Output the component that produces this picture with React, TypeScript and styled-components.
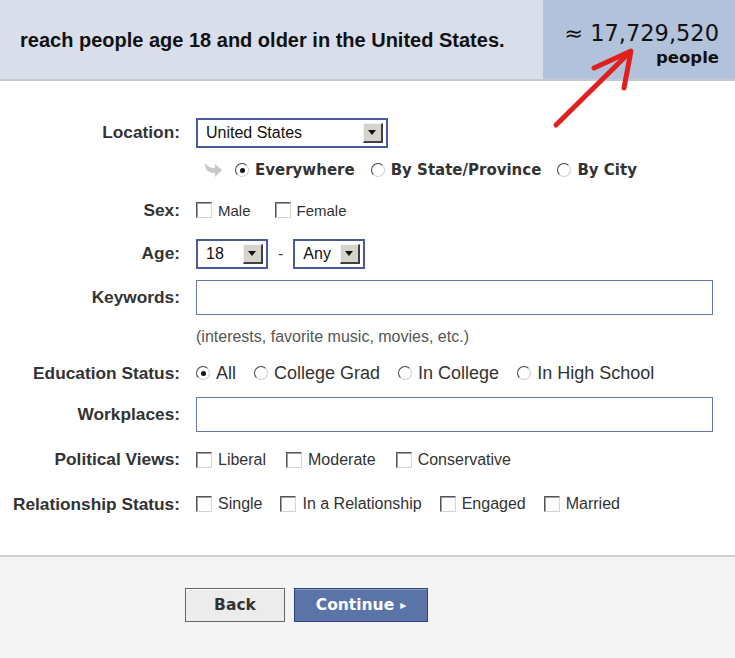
import styled, { createGlobalStyle } from 'styled-components';

const GlobalStyle = createGlobalStyle`
  html, body {
    margin: 0;
    padding: 0;
    background: #ffffff;
  }
  body {
    font-family: "Liberation Sans", Arial, sans-serif;
    color: #222;
  }
`;

export default function App() {
  return (
    <Page>
      <GlobalStyle />
      <Header>
        <HeaderText>reach people age 18 and older in the United States.</HeaderText>
        <Estimate>
          <EstimateNumber>≈ 17,729,520</EstimateNumber>
          <EstimateUnit>people</EstimateUnit>
        </Estimate>
      </Header>

      <Form>
        <Row $h={37}>
          <Label>Location:</Label>
          <Select $w={192}>United States<SelectButton /></Select>
        </Row>
        <Row $h={38}>
          <span />
          <Options $gap={16}>
            <SubArrow viewBox="0 0 20 18">
              <path d="M2 2 C2 10 6 12 12 12 L12 16 L19 9 L12 3 L12 7 C8 7 5 6 2 2 Z" fill="#c9c9c9" />
            </SubArrow>
            <Option $bold $size={15}><Radio $checked />Everywhere</Option>
            <Option $bold $size={15}><Radio />By State/Province</Option>
            <Option $bold $size={15}><Radio />By City</Option>
          </Options>
        </Row>
        <Row $h={42}>
          <Label>Sex:</Label>
          <Options $gap={24}>
            <Option $size={15}><Check />Male</Option>
            <Option $size={15}><Check />Female</Option>
          </Options>
        </Row>
        <Row $h={45}>
          <Label>Age:</Label>
          <Options $gap={10}>
            <Select $w={72}>18<SelectButton /></Select>
            <Dash>-</Dash>
            <Select $w={72}>Any<SelectButton /></Select>
          </Options>
        </Row>
        <Row $h={43}>
          <Label>Keywords:</Label>
          <TextInput />
        </Row>
        <Row $h={35}>
          <span />
          <Hint>(interests, favorite music, movies, etc.)</Hint>
        </Row>
        <Row $h={38}>
          <Label>Education Status:</Label>
          <Options $gap={18}>
            <Option $size={18}><Radio $checked />All</Option>
            <Option $size={18}><Radio />College Grad</Option>
            <Option $size={18}><Radio />In College</Option>
            <Option $size={18}><Radio />In High School</Option>
          </Options>
        </Row>
        <Row $h={45}>
          <Label>Workplaces:</Label>
          <TextInput />
        </Row>
        <Row $h={45}>
          <Label>Political Views:</Label>
          <Options $gap={20}>
            <Option $size={16}><Check />Liberal</Option>
            <Option $size={16}><Check />Moderate</Option>
            <Option $size={16}><Check />Conservative</Option>
          </Options>
        </Row>
        <Row $h={44}>
          <Label>Relationship Status:</Label>
          <Options $gap={18}>
            <Option $size={16}><Check />Single</Option>
            <Option $size={16}><Check />In a Relationship</Option>
            <Option $size={16}><Check />Engaged</Option>
            <Option $size={16}><Check />Married</Option>
          </Options>
        </Row>
      </Form>

      <Footer>
        <Button>Back</Button>
        <Button $primary>Continue <Caret>▸</Caret></Button>
      </Footer>

      <RedArrow viewBox="0 0 120 110">
        <path d="M8 99 L81 27" stroke="#e0201e" strokeWidth="5" strokeLinecap="round" fill="none" />
        <path d="M46 42 L83 25 L76 62" stroke="#e0201e" strokeWidth="5" strokeLinecap="round" strokeLinejoin="round" fill="none" />
      </RedArrow>
    </Page>
  );
}

const Page = styled.div`
  position: relative;
  width: 735px;
  height: 658px;
  overflow: hidden;
  background: #fff;
`;

const Header = styled.div`
  display: grid;
  grid-template-columns: 543px 1fr;
  height: 79px;
  border-bottom: 2px solid #c4c8cf;
`;

const HeaderText = styled.div`
  background: #d9dfea;
  display: flex;
  align-items: center;
  padding-left: 20px;
  padding-top: 2px;
  font-size: 20px;
  font-weight: bold;
  color: #111;
`;

const Estimate = styled.div`
  background: #b2c2db;
  display: flex;
  flex-direction: column;
  align-items: flex-end;
  justify-content: center;
  padding-right: 16px;
  padding-top: 10px;
  font-family: "DejaVu Sans", Verdana, sans-serif;
  color: #111;
`;

const EstimateNumber = styled.div`
  font-size: 22.5px;
  line-height: 26px;
`;

const EstimateUnit = styled.div`
  font-size: 16.5px;
  font-weight: bold;
  line-height: 24px;
`;

const Form = styled.div`
  padding: 33px 0 29px;
  border-bottom: 2px solid #d0d0d0;
`;

const Row = styled.div<{ $h: number }>`
  display: grid;
  grid-template-columns: 180px 1fr;
  column-gap: 16px;
  align-items: center;
  height: ${(p) => p.$h}px;
`;

const Label = styled.div`
  text-align: right;
  font-size: 17.3px;
  font-weight: bold;
  color: #333;
  white-space: nowrap;
`;

const Options = styled.div<{ $gap: number }>`
  display: flex;
  align-items: center;
  gap: ${(p) => p.$gap}px;
`;

const Option = styled.label<{ $bold?: boolean; $size: number }>`
  display: flex;
  align-items: center;
  gap: 6px;
  font-size: ${(p) => p.$size}px;
  font-weight: ${(p) => (p.$bold ? 'bold' : 'normal')};
  font-family: ${(p) => (p.$bold ? '"DejaVu Sans", Verdana, sans-serif' : '"Liberation Sans", Arial, sans-serif')};
  color: #333;
  white-space: nowrap;
`;

const Check = styled.span`
  display: inline-block;
  width: 16px;
  height: 16px;
  box-sizing: border-box;
  background: #fff;
  border-style: solid;
  border-width: 1px;
  border-color: #555 #d4d4d4 #d4d4d4 #555;
  box-shadow: inset 1px 1px 0 #a0a0a0;
`;

const Radio = styled.span<{ $checked?: boolean }>`
  position: relative;
  display: inline-block;
  width: 14px;
  height: 14px;
  box-sizing: border-box;
  border-radius: 50%;
  background: #fff;
  border-style: solid;
  border-width: 1.5px;
  border-color: #444 #d0d0d0 #d0d0d0 #444;
  &::after {
    content: '';
    display: ${(p) => (p.$checked ? 'block' : 'none')};
    position: absolute;
    left: 50%;
    top: 50%;
    width: 5px;
    height: 5px;
    margin: -2.5px 0 0 -2.5px;
    border-radius: 50%;
    background: #111;
  }
`;

const SubArrow = styled.svg`
  width: 20px;
  height: 18px;
  margin-left: 7px;
  margin-right: -4px;
`;

const Select = styled.div<{ $w: number }>`
  display: flex;
  align-items: center;
  justify-content: space-between;
  width: ${(p) => p.$w}px;
  height: 30px;
  box-sizing: border-box;
  border: 2px solid #4a5aa0;
  padding: 0 3px 0 8px;
  background: #fff;
  font-size: 16px;
  color: #111;
`;

const SelectButton = styled.span`
  position: relative;
  width: 20px;
  height: 20px;
  box-sizing: border-box;
  background: #d6d3cb;
  border-style: solid;
  border-width: 1px 2px 2px 1px;
  border-color: #f4f4f4 #404040 #404040 #f4f4f4;
  &::after {
    content: '';
    position: absolute;
    left: 4px;
    top: 6px;
    border-left: 4.5px solid transparent;
    border-right: 4.5px solid transparent;
    border-top: 5px solid #111;
  }
`;

const Dash = styled.span`
  font-size: 16px;
  color: #444;
`;

const TextInput = styled.div`
  width: 517px;
  height: 35px;
  box-sizing: border-box;
  border: 1.5px solid #6776b2;
  background: #fff;
`;

const Hint = styled.div`
  font-size: 16px;
  color: #555;
`;

const Footer = styled.div`
  display: flex;
  gap: 9px;
  height: 102px;
  box-sizing: border-box;
  padding: 31px 0 0 185px;
  background: #f4f4f4;
`;

const Button = styled.div<{ $primary?: boolean }>`
  display: flex;
  align-items: center;
  justify-content: center;
  gap: 6px;
  width: ${(p) => (p.$primary ? 134 : 100)}px;
  height: 34px;
  box-sizing: border-box;
  border: 1.5px solid ${(p) => (p.$primary ? '#29447e' : '#666')};
  background: ${(p) => (p.$primary ? '#5b74a8' : '#ececec')};
  box-shadow: inset 0 1px 0 ${(p) => (p.$primary ? '#8a9cc2' : '#fff')};
  color: ${(p) => (p.$primary ? '#fff' : '#333')};
  font-family: "DejaVu Sans", Verdana, sans-serif;
  font-size: 15.5px;
  font-weight: bold;
`;

const Caret = styled.span`
  font-size: 12px;
`;

const RedArrow = styled.svg`
  position: absolute;
  left: 548px;
  top: 26px;
  width: 120px;
  height: 110px;
`;
